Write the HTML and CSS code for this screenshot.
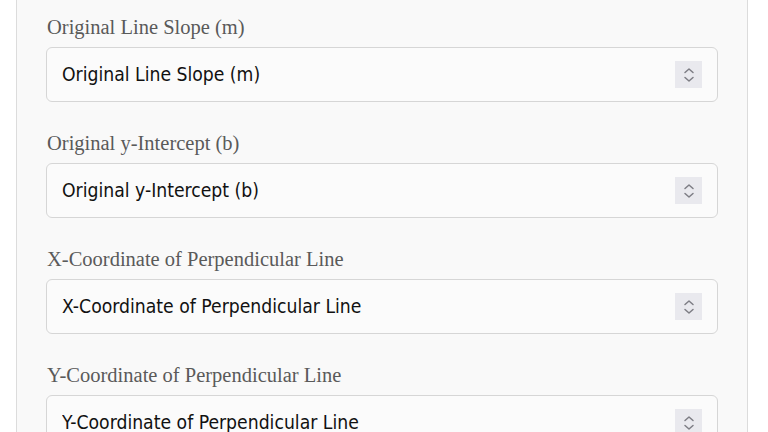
FILE: index.html
```html
<!DOCTYPE html>
<html>
<head>
<meta charset="utf-8">
<link rel="stylesheet" href="styles.css">
</head>
<body>
<div class="panel">
  <div class="field">
    <label class="label" for="m">Original Line Slope (m)</label>
    <div class="box">
      <input class="num" id="m" type="number" placeholder="Original Line Slope (m)">
      <span class="spin"><svg width="14" height="18" viewBox="0 0 14 18"><path d="M3 6.5 L7 3 L11 6.5 M3 11.5 L7 15 L11 11.5" fill="none" stroke="#7d7d84" stroke-width="1.5" stroke-linecap="round" stroke-linejoin="round"/></svg></span>
    </div>
  </div>
  <div class="field">
    <label class="label" for="b">Original y-Intercept (b)</label>
    <div class="box">
      <input class="num" id="b" type="number" placeholder="Original y-Intercept (b)">
      <span class="spin"><svg width="14" height="18" viewBox="0 0 14 18"><path d="M3 6.5 L7 3 L11 6.5 M3 11.5 L7 15 L11 11.5" fill="none" stroke="#7d7d84" stroke-width="1.5" stroke-linecap="round" stroke-linejoin="round"/></svg></span>
    </div>
  </div>
  <div class="field">
    <label class="label" for="x">X-Coordinate of Perpendicular Line</label>
    <div class="box">
      <input class="num" id="x" type="number" placeholder="X-Coordinate of Perpendicular Line">
      <span class="spin"><svg width="14" height="18" viewBox="0 0 14 18"><path d="M3 6.5 L7 3 L11 6.5 M3 11.5 L7 15 L11 11.5" fill="none" stroke="#7d7d84" stroke-width="1.5" stroke-linecap="round" stroke-linejoin="round"/></svg></span>
    </div>
  </div>
  <div class="field">
    <label class="label" for="y">Y-Coordinate of Perpendicular Line</label>
    <div class="box">
      <input class="num" id="y" type="number" placeholder="Y-Coordinate of Perpendicular Line">
      <span class="spin"><svg width="14" height="18" viewBox="0 0 14 18"><path d="M3 6.5 L7 3 L11 6.5 M3 11.5 L7 15 L11 11.5" fill="none" stroke="#7d7d84" stroke-width="1.5" stroke-linecap="round" stroke-linejoin="round"/></svg></span>
    </div>
  </div>
</div>
</body>
</html>
```

FILE: styles.css
```css
html, body {
  margin: 0;
  padding: 0;
  background: #ffffff;
  height: 432px;
  overflow: hidden;
}
.panel {
  margin-left: 16px;
  background: #f9f9f9;
  border: 1px solid #dcdcdc;
  border-top: 0;
  padding: 15px 29px 40px 29px;
  box-sizing: content-box;
  width: 672px;
  display: flex;
  flex-direction: column;
  gap: 29px;
}
.field {
  display: flex;
  flex-direction: column;
  gap: 8px;
}
.label {
  font-family: "Liberation Serif", serif;
  font-size: 20.5px;
  line-height: 24px;
  color: #5a5a5a;
  padding-left: 1px;
}
.box {
  height: 53px;
  border: 1px solid #d6d6d6;
  border-radius: 6px;
  background: #fbfbfb;
  display: flex;
  align-items: center;
  padding: 0 15px 0 15px;
}
.num {
  flex: 1;
  border: 0;
  outline: none;
  background: transparent;
  font-family: "DejaVu Sans Condensed", "DejaVu Sans", sans-serif;
  font-stretch: condensed;
  font-size: 19.2px;
  color: #111;
  padding: 0;
  margin: 0;
  -moz-appearance: textfield;
  appearance: textfield;
}
.num::placeholder {
  color: #111;
  opacity: 1;
}
.num::-webkit-inner-spin-button,
.num::-webkit-outer-spin-button {
  -webkit-appearance: none;
  margin: 0;
}
.spin {
  width: 27px;
  height: 27px;
  background: #e9e9ee;
  display: flex;
  align-items: center;
  justify-content: center;
}
```
